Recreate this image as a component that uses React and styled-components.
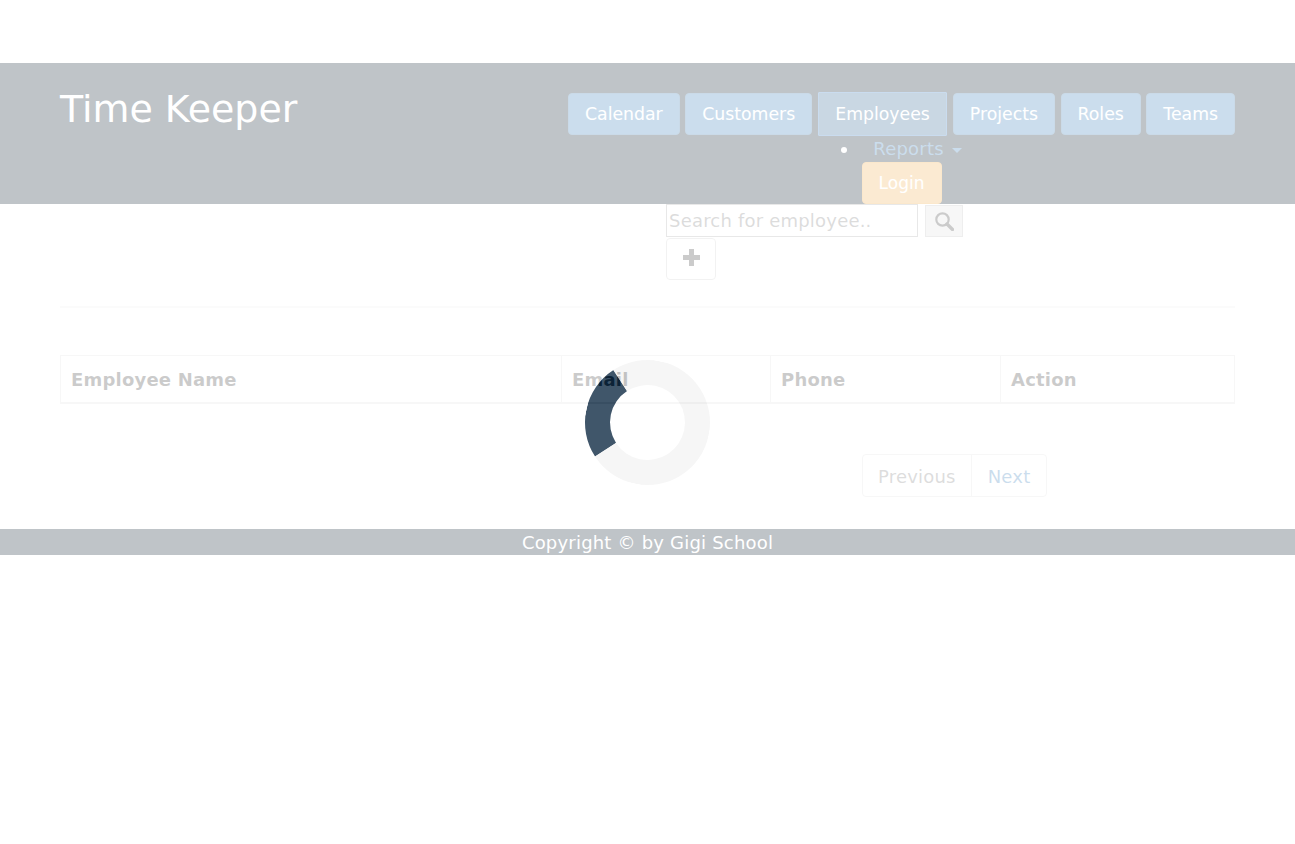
import React from 'react'
import styled, { createGlobalStyle } from 'styled-components'

const navy = '#001424'
const font = '"DejaVu Sans", Verdana, sans-serif'

const GlobalStyle = createGlobalStyle`
  * { box-sizing: border-box; }
  html, body { margin: 0; background: #fff; }
  body {
    font-family: ${font};
    font-size: 18px;
    line-height: 26px;
    letter-spacing: 0.2px;
    color: #333;
  }
`

const Page = styled.div`
  padding-top: 63px;
`

const Header = styled.header`
  background: ${navy};
  padding: 0 60px;
  height: 141px;
  display: flex;
  justify-content: space-between;
`

const Title = styled.h1`
  margin: 24px 0 0;
  font-size: 37.9px;
  line-height: 44px;
  font-weight: 400;
  letter-spacing: 0;
  color: #fff;
`

const Nav = styled.nav`
  width: 667px;
  padding-top: 29px;
  display: flex;
  flex-direction: column;
  align-items: center;
`

const NavRow = styled.div`
  width: 100%;
  height: 44px;
  margin-bottom: -1px;
  display: flex;
  align-items: center;
  justify-content: space-between;
`

const NavButton = styled.a`
  display: block;
  height: ${p => (p.$active ? '44px' : '42px')};
  padding: ${p => (p.$active ? '8px 16.5px' : '7px 16px')};
  background: ${p => (p.$active ? '#286090' : '#337ab7')};
  border: 1px solid ${p => (p.$active ? '#2e76c0' : '#2e6da4')};
  border-radius: ${p => (p.$active ? '1px' : '4px')};
  font-size: 17.3px;
  letter-spacing: 0;
  color: #fff;
`

const ReportsList = styled.ul`
  margin: 0 0 0 2px;
  padding: 1px 0 0;
  height: 27px;
  color: #fff;
  list-style: disc;
`

const ReportsItem = styled.li`
  margin-left: 16px;
  padding-left: 14px;
  color: #fff;
  a {
    color: #337ab7;
    display: inline-flex;
    align-items: center;
    gap: 8px;
  }
`

const Caret = styled.span`
  width: 0;
  height: 0;
  margin-top: 3px;
  border-top: 5px solid #337ab7;
  border-left: 5px solid transparent;
  border-right: 5px solid transparent;
`

const LoginButton = styled.a`
  display: block;
  width: 80px;
  height: 42px;
  padding-top: 7px;
  text-align: center;
  background: #f0ad4e;
  border: 1px solid #eea236;
  border-radius: 4px;
  font-size: 17px;
  letter-spacing: 0;
  color: #fff;
`

const Main = styled.main`
  padding: 0 60px;
`

const Toolbar = styled.div`
  margin-left: 606px;
  height: 102px;
`

const SearchRow = styled.div`
  display: flex;
  gap: 7px;
  height: 34px;
`

const SearchInput = styled.input`
  width: 252px;
  height: 33px;
  padding: 0 2px;
  border: 1px solid #a4a4a4;
  font-family: ${font};
  font-size: 18px;
  letter-spacing: 0.2px;
  color: #333;
  background: #fff;
  outline: none;
  &::placeholder { color: #757575; opacity: 1; }
`

const SearchButton = styled.button`
  width: 38px;
  height: 32px;
  margin-top: 1px;
  padding: 0;
  display: flex;
  align-items: center;
  justify-content: center;
  background: #e0e0e0;
  border: 1px solid #bbb;
  color: #333;
`

const AddButton = styled.button`
  display: flex;
  align-items: center;
  justify-content: center;
  width: 50px;
  height: 42px;
  padding: 0 0 4px;
  background: #fff;
  border: 1px solid #ccc;
  border-radius: 4px;
  color: #333;
`

const Divider = styled.hr`
  margin: 0 0 47px;
  border: 0;
  border-top: 2px solid #eee;
`

const Table = styled.table`
  width: 1174px;
  border-collapse: collapse;
  table-layout: fixed;
  th {
    height: 47px;
    padding: 2px 10px 0;
    text-align: left;
    font-size: 18px;
    font-weight: 700;
    border: 1px solid #ddd;
    border-bottom-width: 2px;
  }
`

const PagerRow = styled.div`
  margin: 50px 0 32px 802px;
  height: 43px;
  width: 185px;
  display: flex;
  border: 1px solid #ddd;
  border-radius: 4px;
`

const PagerLink = styled.a`
  padding: 9px 15px 0 ${p => (p.$disabled ? '15px' : '16px')};
  color: ${p => (p.$disabled ? '#777' : '#337ab7')};
  & + & { border-left: 1px solid #ddd; }
`

const Footer = styled.footer`
  height: 26px;
  background: ${navy};
  line-height: 28px;
  color: #fff;
  text-align: center;
`

const Overlay = styled.div`
  position: fixed;
  inset: 0;
  display: flex;
  align-items: center;
  justify-content: center;
  background: #fff;
  opacity: 0.75;
`

const Spinner = styled.div`
  width: 125px;
  height: 125px;
  border: 25px solid #f3f3f3;
  border-top-color: #001e38;
  border-radius: 50%;
  transform: rotate(-78deg);
`

const navItems = ['Calendar', 'Customers', 'Employees', 'Projects', 'Roles', 'Teams']
const columns = [
  ['Employee Name', 501],
  ['Email', 209],
  ['Phone', 230],
  ['Action', 234],
]

export default function App() {
  return (
    <>
      <GlobalStyle />
      <Page>
        <Header>
          <Title>Time Keeper</Title>
          <Nav>
            <NavRow>
              {navItems.map(item => (
                <NavButton key={item} $active={item === 'Employees'}>{item}</NavButton>
              ))}
            </NavRow>
            <ReportsList>
              <ReportsItem>
                <a>Reports <Caret /></a>
              </ReportsItem>
            </ReportsList>
            <LoginButton>Login</LoginButton>
          </Nav>
        </Header>
        <Main>
          <Toolbar>
            <SearchRow>
              <SearchInput placeholder="Search for employee.." />
              <SearchButton aria-label="Search">
                <svg width="19" height="19" viewBox="0 0 19 19" fill="none" stroke="currentColor">
                  <circle cx="7.5" cy="7.5" r="6.2" strokeWidth="2.2" />
                  <path d="M12 12l5.5 5.5" strokeWidth="3.4" strokeLinecap="round" />
                </svg>
              </SearchButton>
            </SearchRow>
            <AddButton aria-label="Add">
              <svg width="17" height="17" viewBox="0 0 17 17" fill="currentColor">
                <path d="M6 0h5v6h6v5h-6v6H6v-6H0V6h6z" />
              </svg>
            </AddButton>
          </Toolbar>
          <Divider />
          <Table>
            <colgroup>
              {columns.map(([name, width]) => <col key={name} width={width} />)}
            </colgroup>
            <thead>
              <tr>
                {columns.map(([name]) => <th key={name}>{name}</th>)}
              </tr>
            </thead>
          </Table>
          <PagerRow>
            <PagerLink $disabled>Previous</PagerLink>
            <PagerLink>Next</PagerLink>
          </PagerRow>
        </Main>
        <Footer>Copyright © by Gigi School</Footer>
      </Page>
      <Overlay>
        <Spinner />
      </Overlay>
    </>
  )
}
